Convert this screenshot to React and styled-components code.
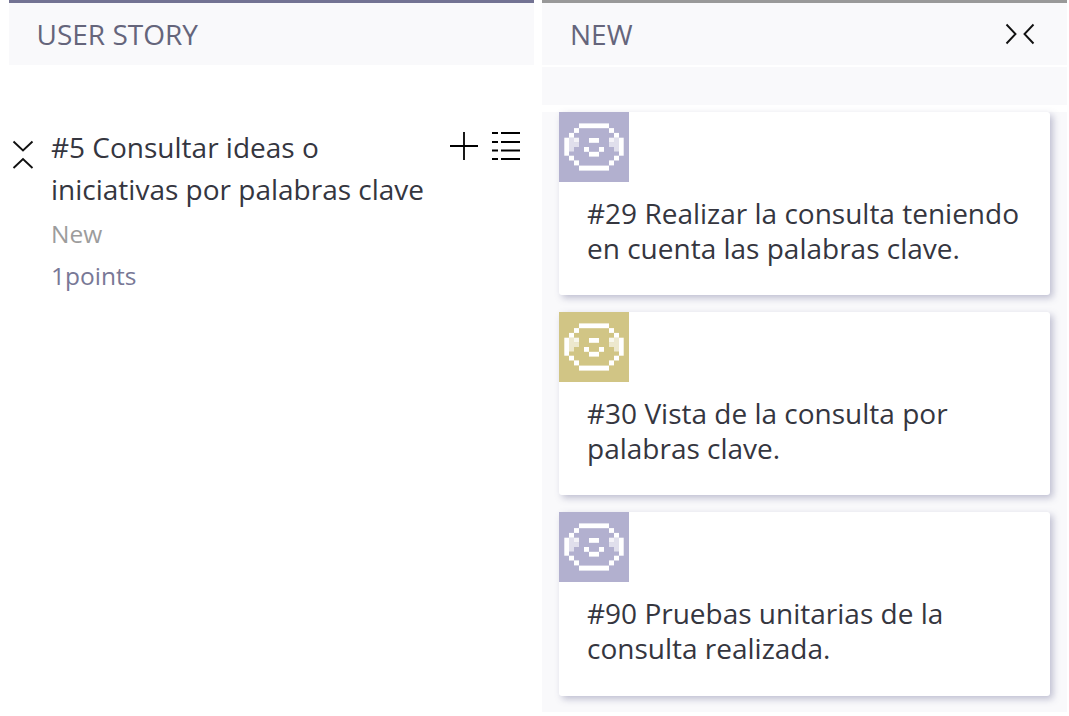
import React from "react";
import styled, { createGlobalStyle } from "styled-components";

const GlobalStyle = createGlobalStyle`
  * { box-sizing: border-box; }
  body { margin: 0; background: #fff; font-family: "Open Sans", sans-serif; overflow: hidden; }
  h1, h2, p { margin: 0; font-weight: 400; }
`;

const Board = styled.main`
  display: grid;
  grid-template-columns: 525px 525px;
  column-gap: 8px;
  width: 1069px;
  height: 716px;
  padding-left: 9px;
`;

const Column = styled.section`
  display: flex;
  flex-direction: column;
  height: 712px;
`;

const ColumnHeader = styled.header`
  display: flex;
  flex: none;
  align-items: center;
  justify-content: space-between;
  height: 65px;
  padding: 0 32px 0 ${(p) => p.$inset}px;
  border-top: 3px solid ${(p) => p.$accent};
  background: #f9f9fb;
`;

const ColumnTitle = styled.h1`
  font-size: 28px;
  line-height: 38px;
  color: #65657b;
`;

const Story = styled.article`
  display: flex;
  align-items: flex-start;
  padding: 61px 14px 0 3px;
`;

const FoldIcon = styled.svg`
  flex: none;
  width: 22px;
  height: 30px;
  margin: 14px 17px 0 0;
`;

const StoryBody = styled.div`
  flex: 1;
`;

const StoryTitle = styled.h2`
  margin-bottom: 3px;
  font-size: 28px;
  line-height: 42px;
  color: #35363f;
  white-space: nowrap;
`;

const StoryMeta = styled.p`
  font-size: 24.5px;
  line-height: 42px;
  color: ${(p) => p.$color};
`;

const Actions = styled.div`
  display: flex;
  gap: 14px;
  padding-top: 6px;
`;

const Icon = styled.svg`
  display: block;
  flex: none;
`;

const Swimlane = styled.div`
  flex: none;
  height: 38px;
  margin: 2px 0 7px;
  background: #f9f9fb;
`;

const CardList = styled.div`
  display: flex;
  flex: 1;
  flex-direction: column;
  gap: 17px;
  padding: 0 17px;
  background: #f9f9fb;
`;

const Card = styled.article`
  flex: none;
  height: ${(p) => p.$height || 183}px;
  border-radius: 3px;
  background: #fff;
  box-shadow: 3px 3px 7px rgba(80, 80, 130, 0.35);
`;

const Avatar = styled.svg`
  display: block;
  width: 70px;
  height: 70px;
  background: ${(p) => p.$color};
`;

const CardText = styled.p`
  padding: 14px 0 0 28px;
  font-size: 28px;
  line-height: 35px;
  color: #35363f;
  white-space: nowrap;
`;

const facePixels = [
  [20, 11.4, 30, 4.8],
  [15, 16.1, 5, 4.8], [50, 16.1, 5, 4.8],
  [10, 20.9, 5, 4.8], [55, 20.9, 5, 4.8],
  [5.3, 25.7, 4.7, 18], [60, 25.7, 4.7, 18],
  [10, 43.7, 5, 4.8], [55, 43.7, 5, 4.8],
  [15, 48.4, 5, 5], [50, 48.4, 5, 5],
  [20, 53.6, 30, 5],
  [30, 26, 10, 4.8],
  [25, 35, 5, 4.8], [40, 35, 5, 4.8],
  [30, 39.8, 10, 4.8],
];

const shadePixels = [
  [10, 25.7, 5, 13.8], [15, 30.4, 5, 4.6],
  [55, 25.7, 5, 13.8], [50, 30.4, 5, 4.6],
];

const highlightPixels = [
  [15, 25.7, 5, 4.7], [50, 25.7, 5, 4.7],
];

const Pixels = ({ items, ...rest }) =>
  items.map(([x, y, width, height]) => (
    <rect key={`${x}-${y}`} x={x} y={y} width={width} height={height} {...rest} />
  ));

const tasks = [
  { color: "#b2b0cf", lines: ["#29 Realizar la consulta teniendo", "en cuenta las palabras clave."] },
  { color: "#d1c585", lines: ["#30 Vista de la consulta por", "palabras clave."] },
  { color: "#b2b0cf", height: 184, lines: ["#90 Pruebas unitarias de la", "consulta realizada."] },
];

export default function App() {
  return (
    <>
      <GlobalStyle />
      <Board>
        <Column>
          <ColumnHeader $accent="#737393" $inset={27.5}>
            <ColumnTitle>USER STORY</ColumnTitle>
          </ColumnHeader>
          <Story>
            <FoldIcon viewBox="0 0 22 30" fill="none" stroke="#111" strokeWidth="1.9">
              <path d="M1.5 1.5 11 10.5 20.5 1.5M1.5 28 11 19 20.5 28" />
            </FoldIcon>
            <StoryBody>
              <StoryTitle>#5 Consultar ideas o<br />iniciativas por palabras clave</StoryTitle>
              <StoryMeta $color="#9c9c9c">New</StoryMeta>
              <StoryMeta $color="#787896">1points</StoryMeta>
            </StoryBody>
            <Actions>
              <Icon width="28" height="28" viewBox="0 0 28 28" stroke="#000" strokeWidth="1.8">
                <path d="M0 14H28M14 0V28" />
              </Icon>
              <Icon width="28" height="28" viewBox="0 0 28 28" stroke="#000" strokeWidth="1.8">
                <path d="M0 1H6M9 1H28M0 10H6M9 10H28M0 18.5H6M9 18.5H28M0 27H6M9 27H28" />
              </Icon>
            </Actions>
          </Story>
        </Column>
        <Column>
          <ColumnHeader $accent="#999" $inset={28}>
            <ColumnTitle>NEW</ColumnTitle>
            <Icon width="30" height="22" viewBox="0 0 30 22" fill="none" stroke="#111" strokeWidth="1.9">
              <path d="M1.5 1.5 10.5 11 1.5 20.5M28.5 1.5 19.5 11 28.5 20.5" />
            </Icon>
          </ColumnHeader>
          <Swimlane />
          <CardList>
            {tasks.map((task) => (
              <Card key={task.lines[0]} $height={task.height}>
                <Avatar viewBox="0 0 70 70" $color={task.color}>
                  <Pixels items={shadePixels} fill="#fff" opacity="0.6" />
                  <Pixels items={highlightPixels} fill="#fff" opacity="0.85" />
                  <Pixels items={facePixels} fill="#fff" />
                </Avatar>
                <CardText>{task.lines[0]}<br />{task.lines[1]}</CardText>
              </Card>
            ))}
          </CardList>
        </Column>
      </Board>
    </>
  );
}
